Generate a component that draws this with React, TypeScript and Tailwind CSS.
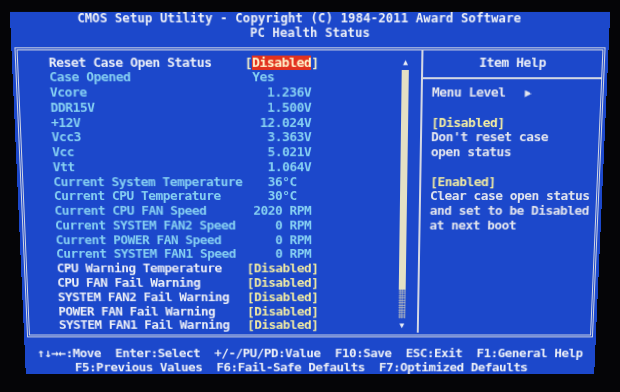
type Kind = 'select' | 'info' | 'option';

const rows: { label: string; value: string; kind: Kind }[] = [
  { label: 'Reset Case Open Status', value: 'Disabled', kind: 'select' },
  { label: 'Case Opened', value: ' Yes', kind: 'info' },
  { label: 'Vcore', value: '   1.236V', kind: 'info' },
  { label: 'DDR15V', value: '   1.500V', kind: 'info' },
  { label: '+12V', value: '  12.024V', kind: 'info' },
  { label: 'Vcc3', value: '   3.363V', kind: 'info' },
  { label: 'Vcc', value: '   5.021V', kind: 'info' },
  { label: 'Vtt', value: '   1.064V', kind: 'info' },
  { label: 'Current System Temperature', value: '   36°C', kind: 'info' },
  { label: 'Current CPU Temperature', value: '   30°C', kind: 'info' },
  { label: 'Current CPU FAN Speed', value: ' 2020 RPM', kind: 'info' },
  { label: 'Current SYSTEM FAN2 Speed', value: '    0 RPM', kind: 'info' },
  { label: 'Current POWER FAN Speed', value: '    0 RPM', kind: 'info' },
  { label: 'Current SYSTEM FAN1 Speed', value: '    0 RPM', kind: 'info' },
  { label: 'CPU Warning Temperature', value: '[Disabled]', kind: 'option' },
  { label: 'CPU FAN Fail Warning', value: '[Disabled]', kind: 'option' },
  { label: 'SYSTEM FAN2 Fail Warning', value: '[Disabled]', kind: 'option' },
  { label: 'POWER FAN Fail Warning', value: '[Disabled]', kind: 'option' },
  { label: 'SYSTEM FAN1 Fail Warning', value: '[Disabled]', kind: 'option' },
];

function SettingRow({ label, value, kind }: { label: string; value: string; kind: Kind }) {
  if (kind === 'select') {
    return (
      <div className="flex h-[14.77px]">
        <span className="w-[192px] text-[#eceff7]">{label}</span>
        <span className="text-[#f2eec8]">[</span>
        <span className="bg-[#e2321e] text-[#fff4cc]">{value}</span>
        <span className="text-[#f2eec8]">]</span>
      </div>
    );
  }
  const info = kind === 'info';
  return (
    <div className="flex h-[14.77px]">
      <span className={info ? 'w-[192px] text-[#86d0f2]' : 'w-[192px] text-[#eceff7]'}>{label}</span>
      <span className={info ? 'text-[#86d0f2]' : 'text-[#f2eca2]'}>{value}</span>
    </div>
  );
}

export default function App() {
  return (
    <div className="w-[620px] h-[392px] bg-[#050507] pl-[18px] pt-[15px] overflow-hidden">
      <div className="w-[584px] h-[366px] bg-[#1c48cb] [transform:perspective(1000px)_rotateX(-8.6deg)] font-['DejaVu_Sans_Mono',monospace] font-bold text-[12.8px] tracking-[-0.45px] text-[#eceff7] flex flex-col whitespace-pre">
        {/* title */}
        <div className="text-[12px] tracking-[0.1px] leading-[14px] -mt-[1.5px]">
          <div className="text-center pr-[21px]">CMOS Setup Utility - Copyright (C) 1984-2011 Award Software</div>
          <div className="text-center">PC Health Status</div>
        </div>

        <div className="mx-[3px] mt-[7px] border-[3px] border-double border-[#d4d8e4] flex pb-[2px] leading-[14.77px]">
          <div className="w-[395px] pt-[5px] pl-[30px] pr-[12px] flex">
            <div className="flex-1">
              {rows.map((r) => (
                <SettingRow key={r.label} {...r} />
              ))}
            </div>
            {/* scrollbar */}
            <div className="w-[7px] flex flex-col">
              <div className="h-[14.77px] flex items-center justify-center text-[8px] leading-none text-[#eceff7]">▲</div>
              <div className="h-[220.7px] bg-[#e4e0c4]" />
              <div className="h-[30.4px] bg-[radial-gradient(#c9c8bc_0.8px,transparent_1.1px)] bg-[length:2.5px_2.5px]" />
              <div className="h-[14.77px] flex items-center justify-center text-[8px] leading-none text-[#eceff7]">▼</div>
            </div>
          </div>

          <div className="flex-1 border-l-2 border-[#d4d8e4] pt-[5px]">
            <div className="h-[14.77px] text-center">Item Help</div>
            <div className="h-[14.77px] flex items-center">
              <div className="h-[2px] w-full bg-[#d4d8e4]" />
            </div>
            <div className="pl-[9px] text-[#e4e6ee]">
              <div className="h-[14.77px] flex items-center">
                <span>Menu Level</span>
                <span className="ml-[19px] text-[11px] leading-none">▶</span>
              </div>
              <div className="h-[14.77px]" />
              <div className="h-[14.77px] text-[#f2eca2]">[Disabled]</div>
              <div className="h-[14.77px]">Don't reset case</div>
              <div className="h-[14.77px]">open status</div>
              <div className="h-[14.77px]" />
              <div className="h-[14.77px] text-[#f2eca2]">[Enabled]</div>
              <div className="h-[14.77px]">Clear case open status</div>
              <div className="h-[14.77px]">and set to be Disabled</div>
              <div className="h-[14.77px]">at next boot</div>
            </div>
          </div>
        </div>

        <div className="mt-[8.5px] leading-[15px]">
          <div className="text-center">↑↓→←:Move  Enter:Select  +/-/PU/PD:Value  F10:Save  ESC:Exit  F1:General Help</div>
          <div className="text-center pr-[18px]">F5:Previous Values  F6:Fail-Safe Defaults  F7:Optimized Defaults</div>
        </div>
      </div>
    </div>
  );
}
